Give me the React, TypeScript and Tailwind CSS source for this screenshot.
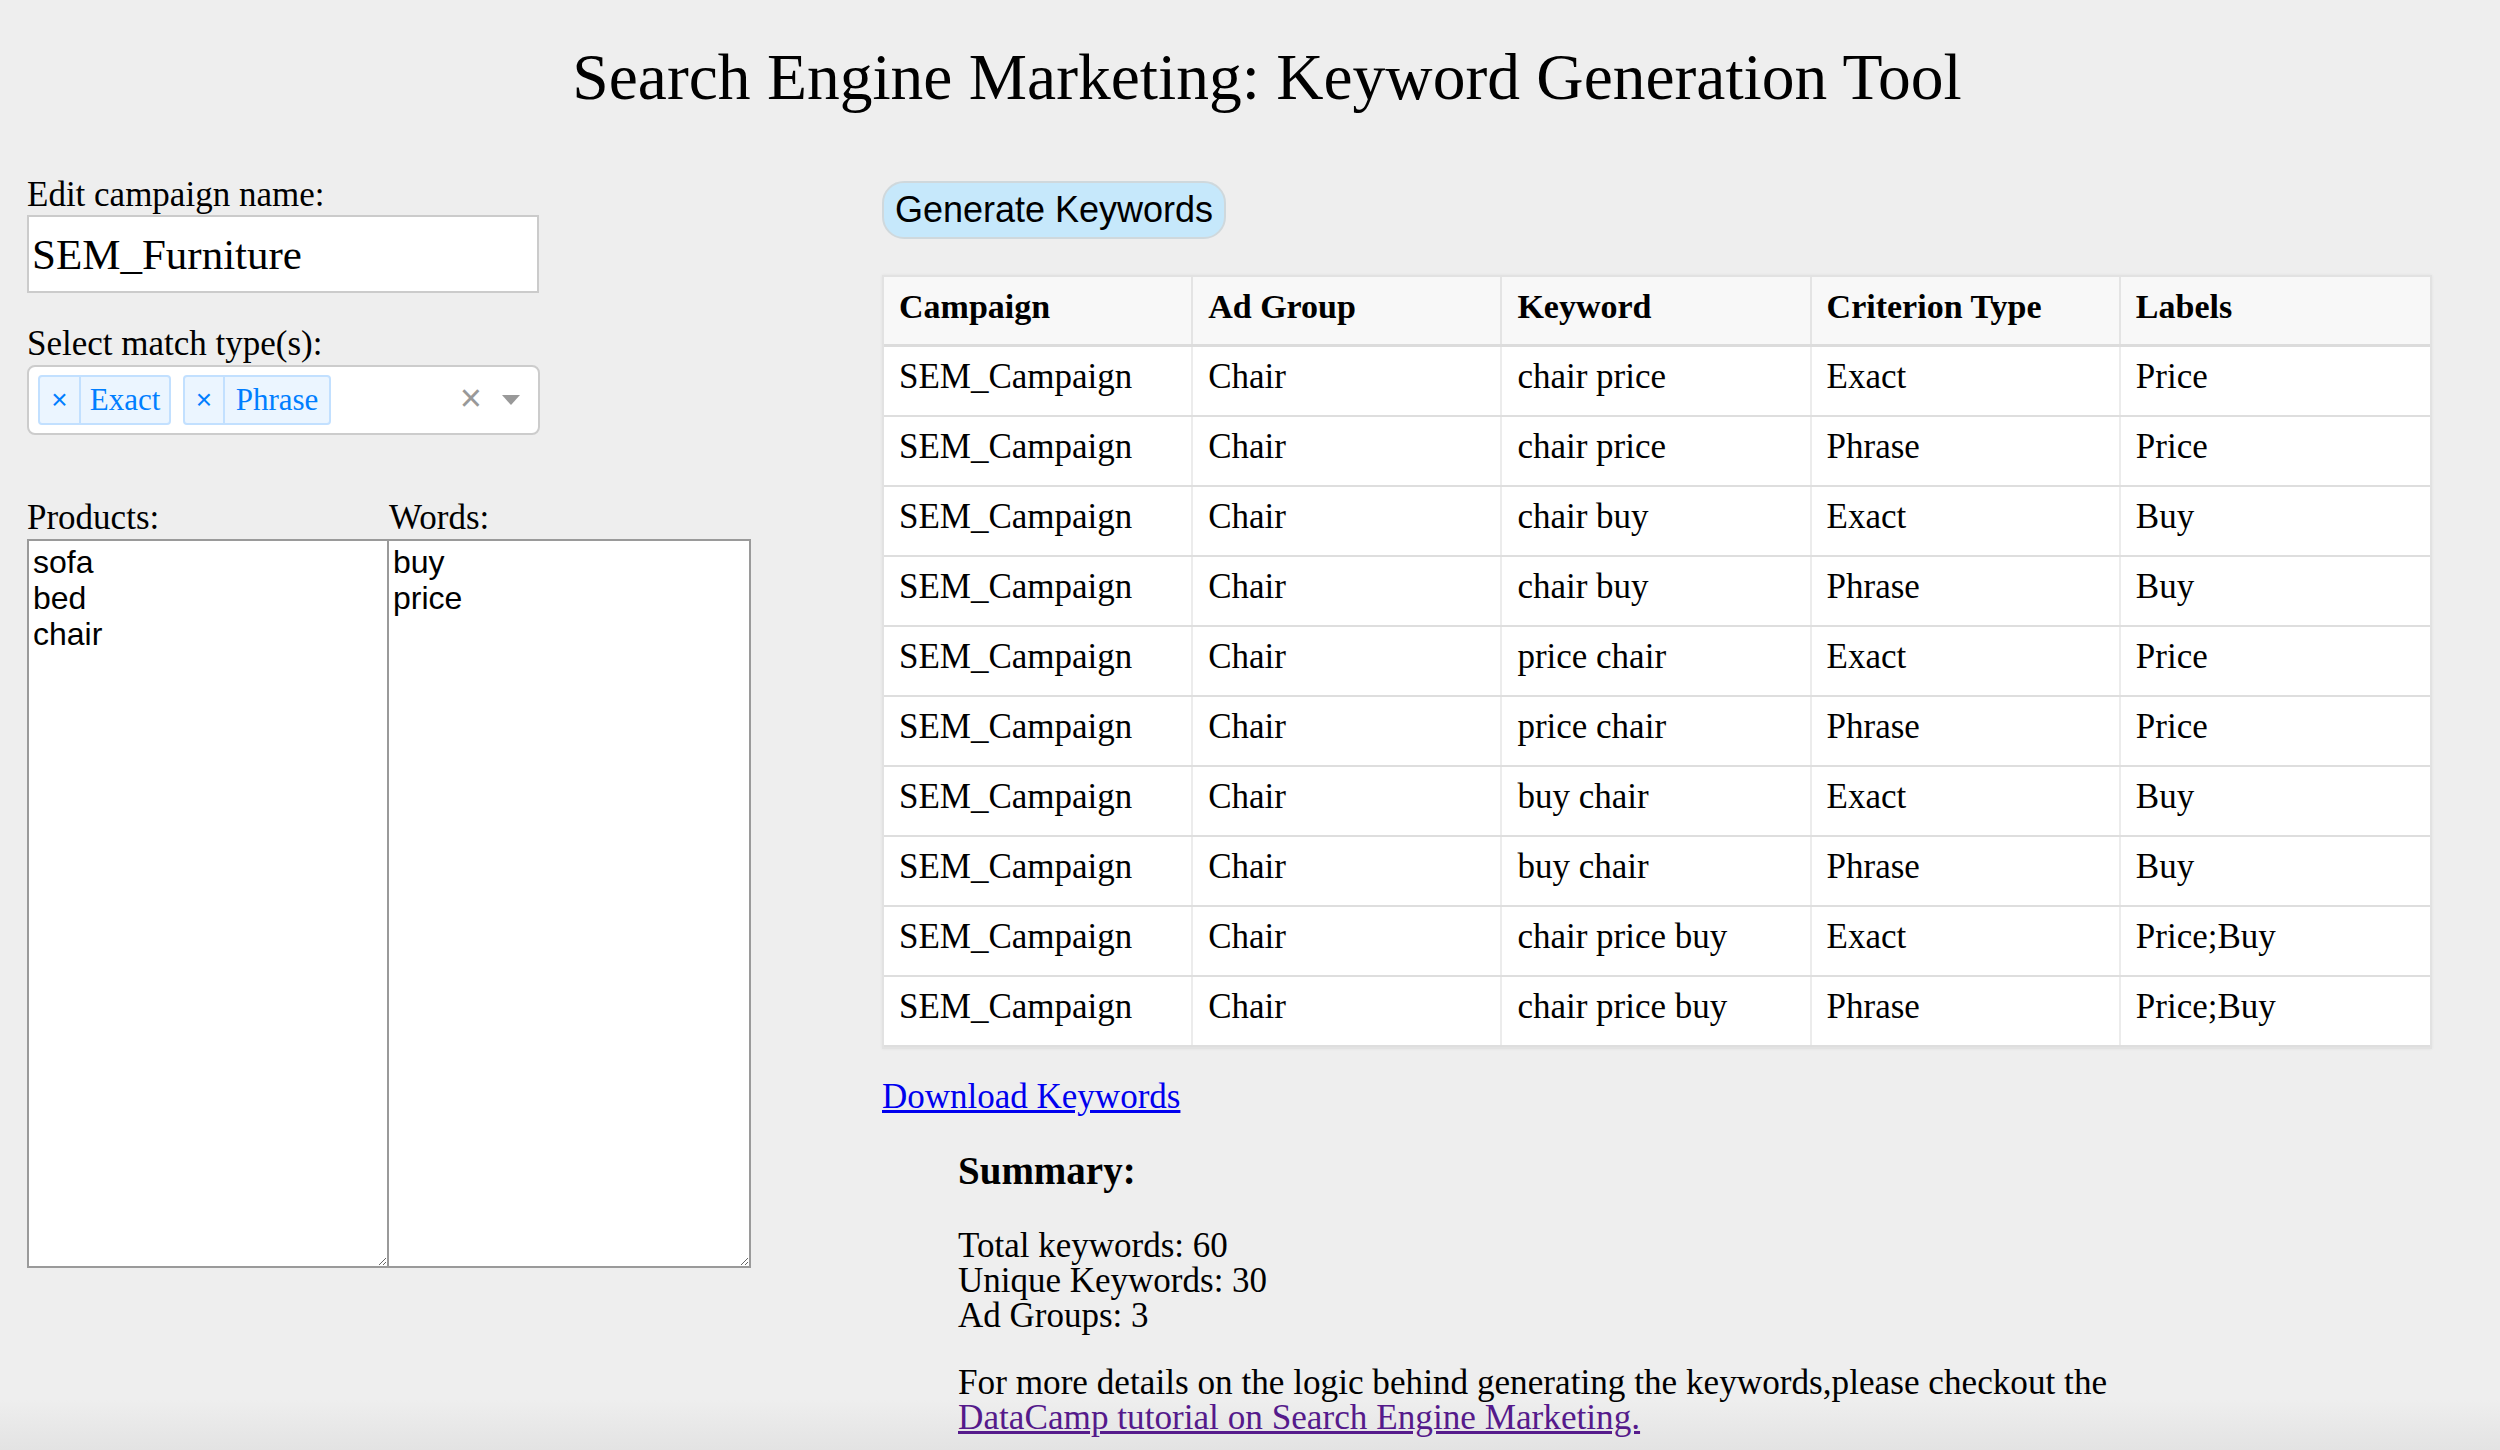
import React from "react";

const rows: [string, string, string][] = [
  ["chair price", "Exact", "Price"],
  ["chair price", "Phrase", "Price"],
  ["chair buy", "Exact", "Buy"],
  ["chair buy", "Phrase", "Buy"],
  ["price chair", "Exact", "Price"],
  ["price chair", "Phrase", "Price"],
  ["buy chair", "Exact", "Buy"],
  ["buy chair", "Phrase", "Buy"],
  ["chair price buy", "Exact", "Price;Buy"],
  ["chair price buy", "Phrase", "Price;Buy"],
];

function Chip({ label, labelW, xW }: { label: string; labelW: string; xW: string }) {
  return (
    <div className="flex h-[50px] rounded-[4px] border-2 border-[#c2e0ff] bg-[#ebf5ff] text-[#007eff]">
      <div
        className={`flex items-center justify-center border-r-2 border-[#c2e0ff] font-['Liberation_Sans',Arial,sans-serif] text-[28px] leading-none ${xW}`}
      >
        ×
      </div>
      <div className={`flex items-center justify-center pb-[2px] text-[31px] leading-none ${labelW}`}>{label}</div>
    </div>
  );
}

export default function App() {
  return (
    <div className="relative min-h-screen bg-[#eeeeee] pt-[40px] font-['Liberation_Serif','Times_New_Roman',serif] text-black">
      <div className="pointer-events-none absolute inset-x-0 bottom-0 h-[50px] bg-gradient-to-b from-transparent to-[#e3e3e3]" />

      <h1 className="relative pl-[34px] text-center text-[65.5px] font-normal leading-[74px]">
        Search Engine Marketing: Keyword Generation Tool
      </h1>

      <div className="relative flex pl-[27px]">
        {/* Left column */}
        <div className="flex w-[724px] flex-col">
          <label className="mt-[61px] text-[35px] leading-[40px]">Edit campaign name:</label>
          <input
            readOnly
            value="SEM_Furniture"
            className="h-[78px] w-[512px] border-2 border-[#cbcbcb] bg-white pl-[3px] text-[43px] outline-none"
          />

          <label className="mt-[31px] text-[35px] leading-[40px]">Select match type(s):</label>
          <div className="mt-[1px] flex h-[70px] w-[513px] items-center rounded-[8px] border-2 border-[#cccccc] bg-white pl-[9px] pr-[18px]">
            <div className="flex gap-[12px]">
              <Chip label="Exact" xW="w-[41px]" labelW="w-[88px]" />
              <Chip label="Phrase" xW="w-[40px]" labelW="w-[104px]" />
            </div>
            <div className="ml-auto flex items-center gap-[20px]">
              <span className="pb-[4px] font-['Liberation_Sans',Arial,sans-serif] text-[38px] leading-none text-[#999999]">
                ×
              </span>
              <span className="h-0 w-0 border-x-[9px] border-t-[10px] border-x-transparent border-t-[#999999]" />
            </div>
          </div>

          <div className="mt-[63px] flex">
            <div className="flex w-[362px] flex-col">
              <label className="text-[35px] leading-[40px]">Products:</label>
              <textarea
                defaultValue={"sofa\nbed\nchair"}
                className="mt-[1px] h-[729px] w-[362px] resize border-2 border-[#9a9a9a] bg-white px-[4px] pt-[3px] font-['Liberation_Sans',Arial,sans-serif] text-[32px] leading-[36px] outline-none"
              />
            </div>
            <div className="flex w-[362px] flex-col">
              <label className="text-[35px] leading-[40px]">Words:</label>
              <textarea
                defaultValue={"buy\nprice"}
                className="mt-[1px] h-[729px] w-[362px] resize border-2 border-l-0 border-[#9a9a9a] bg-white px-[4px] pt-[3px] font-['Liberation_Sans',Arial,sans-serif] text-[32px] leading-[36px] outline-none"
              />
            </div>
          </div>
        </div>

        {/* Right column */}
        <div className="ml-[131px] flex w-[1550px] flex-col">
          <button className="mt-[67px] h-[58px] w-[344px] rounded-[22px] border-2 border-[#cfd8dc] bg-[#c6e8fb] font-['Liberation_Sans',Arial,sans-serif] text-[36px] leading-none text-black">
            Generate Keywords
          </button>

          <div className="mt-[36px] w-[1550px] border-2 border-[#e2e2e2] bg-white shadow-[0_0_3px_rgba(0,0,0,0.06)]">
            <div className="grid h-[70px] grid-cols-5 border-b-[3px] border-[#dcdcdc] bg-[#f8f8f8]">
              {["Campaign", "Ad Group", "Keyword", "Criterion Type", "Labels"].map((h, i) => (
                <div
                  key={h}
                  className={`flex items-center pb-[8px] pl-[15px] text-[34px] font-bold ${
                    i < 4 ? "border-r-2 border-[#e4e4e4]" : ""
                  }`}
                >
                  {h}
                </div>
              ))}
            </div>
            {rows.map((r, idx) => (
              <div key={idx} className="grid h-[70px] grid-cols-5 border-b-2 border-[#dedede]">
                {["SEM_Campaign", "Chair", r[0], r[1], r[2]].map((c, i) => (
                  <div
                    key={i}
                    className={`flex items-center pb-[7px] pl-[15px] text-[35px] ${
                      i < 4 ? "border-r-2 border-[#ececec]" : ""
                    }`}
                  >
                    {c}
                  </div>
                ))}
              </div>
            ))}
          </div>

          <a href="#" className="mt-[28px] self-start text-[35px] leading-[40px] text-[#0000ee] underline">
            Download Keywords
          </a>

          <div className="ml-[76px] flex flex-col">
            <h3 className="mt-[32px] text-[39px] font-bold leading-[44px]">Summary:</h3>
            <div className="mt-[35px] text-[35px] leading-[35px]">
              <div>Total keywords: 60</div>
              <div>Unique Keywords: 30</div>
              <div>Ad Groups: 3</div>
            </div>
            <div className="mt-[32px] text-[35.2px] leading-[35px]">
              <div>For more details on the logic behind generating the keywords,please checkout the</div>
              <a href="#" className="text-[#551a8b] underline">
                DataCamp tutorial on Search Engine Marketing.
              </a>
            </div>
          </div>
        </div>
      </div>
    </div>
  );
}
